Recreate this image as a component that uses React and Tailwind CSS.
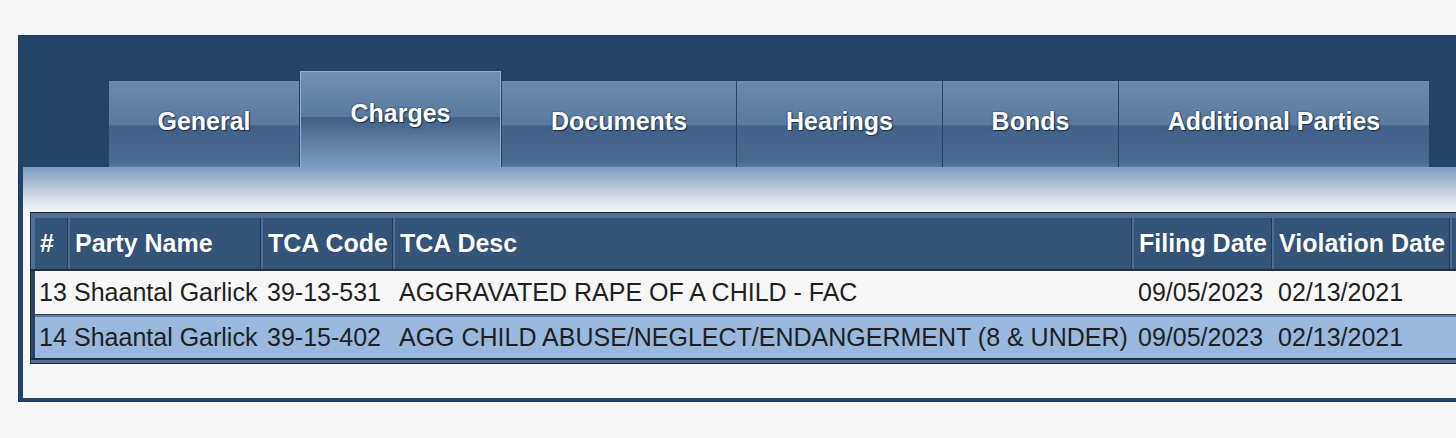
const tabs = [
  { label: "General", w: "w-[190px]" },
  { label: "Charges", w: "w-[201px]", active: true },
  { label: "Documents", w: "w-[234px]" },
  { label: "Hearings", w: "w-[205px]" },
  { label: "Bonds", w: "w-[175px]" },
  { label: "Additional Parties", w: "w-[310px]" },
];

const cols = [
  { key: "n", label: "#", w: "w-[33px]" },
  { key: "party", label: "Party Name", w: "w-[191px]" },
  { key: "code", label: "TCA Code", w: "w-[130px]" },
  { key: "desc", label: "TCA Desc", w: "w-[737px]" },
  { key: "filed", label: "Filing Date", w: "w-[138px]" },
  { key: "viol", label: "Violation Date", w: "w-[176px]" },
  { key: "extra", label: "", w: "w-[150px]" },
];

const rows = [
  {
    n: "13",
    party: "Shaantal Garlick",
    code: "39-13-531",
    desc: "AGGRAVATED RAPE OF A CHILD - FAC",
    filed: "09/05/2023",
    viol: "02/13/2021",
    extra: "",
  },
  {
    n: "14",
    party: "Shaantal Garlick",
    code: "39-15-402",
    desc: "AGG CHILD ABUSE/NEGLECT/ENDANGERMENT (8 & UNDER)",
    filed: "09/05/2023",
    viol: "02/13/2021",
    extra: "",
  },
];

const Tab = ({ label, w, active }) => {
  if (active) {
    return (
      <div
        className={`${w} h-[96px] border border-b-0 border-[#8eaed2] pt-[23px] text-center bg-[linear-gradient(to_bottom,#6f8fb3_0%,#5a7ba1_47%,#3f5f87_48%,#5c7ca4_72%,#7d9cc1_100%)]`}
      >
        <span className="text-[25px] font-bold text-white [text-shadow:0_0_2px_#1b2f48,1px_1px_1px_#1b2f48]">
          {label}
        </span>
      </div>
    );
  }
  return (
    <div
      className={`${w} h-[86px] pt-[22px] text-center bg-[linear-gradient(to_bottom,#6b8aae_0%,#5a7aa0_51%,#41618a_52%,#4a6a92_94%,#5a7aa1_100%)]`}
    >
      <span className="text-[25px] font-bold text-white [text-shadow:0_0_2px_#1b2f48,1px_1px_1px_#1b2f48]">
        {label}
      </span>
    </div>
  );
};

export default function App() {
  return (
    <div
      className="w-[1456px] h-[438px] overflow-hidden bg-[#f6f6f6] pt-[35px] pl-[18px]"
      style={{ fontFamily: '"Liberation Sans", Arial, sans-serif' }}
    >
      <div className="w-[1500px] bg-[#234468] border border-[#1c3a5c] pl-[4px] pb-[3px] shadow-[0_1px_0_#ffffff]">
        {/* tab strip */}
        <div className="h-[131px] flex items-end gap-[1px] pl-[86px]">
          {tabs.map((t) => (
            <Tab key={t.label} {...t} />
          ))}
        </div>

        {/* content */}
        <div className="bg-[#f6f6f6] pb-[34px]">
          <div className="h-[45px] bg-[linear-gradient(to_bottom,#7d9cc1_0%,#a9bcd2_35%,#dde4ec_75%,#f4f5f6_100%)]" />

          <div className="ml-[7px] border border-[#1e2e42]">
            {/* header */}
            <div className="flex gap-[2px] bg-[#4e6e94] pt-[5px] pl-[4px]">
              {cols.map((c) => (
                <div
                  key={c.key}
                  className={`${c.w} shrink-0 h-[51px] flex items-center pl-[5px] pr-[3px] bg-[#34557a] border-r border-[#223a57] text-[25px] font-bold text-white whitespace-nowrap [text-shadow:0_0_1px_#1b2f48]`}
                >
                  {c.label}
                </div>
              ))}
            </div>
            <div className="h-[2px] bg-[#1e2e42]" />

            {/* rows */}
            <div className="border-l-[4px] border-[#2b4461]">
              {rows.map((r, i) => (
                <div key={r.n}>
                  {i > 0 && (
                    <>
                      <div className="h-[1px] bg-[#2a3f58]" />
                      <div className="h-[2px] bg-[#5a7aa0]" />
                    </>
                  )}
                  <div
                    className={`flex gap-[2px] ${i === 0 ? "h-[43px] bg-[#f7f7f7]" : "h-[41px] bg-[#98b8dd]"}`}
                  >
                    {cols.map((c) => (
                      <div
                        key={c.key}
                        className={`${c.w} shrink-0 flex items-center px-[4px] text-[25px] text-[#1f1f1f] whitespace-nowrap`}
                      >
                        {r[c.key]}
                      </div>
                    ))}
                  </div>
                </div>
              ))}
            </div>
            <div className="h-[2px] bg-[#1e2e42]" />
            <div className="h-[3px] bg-[#4e6e94]" />
          </div>
        </div>
      </div>
    </div>
  );
}
